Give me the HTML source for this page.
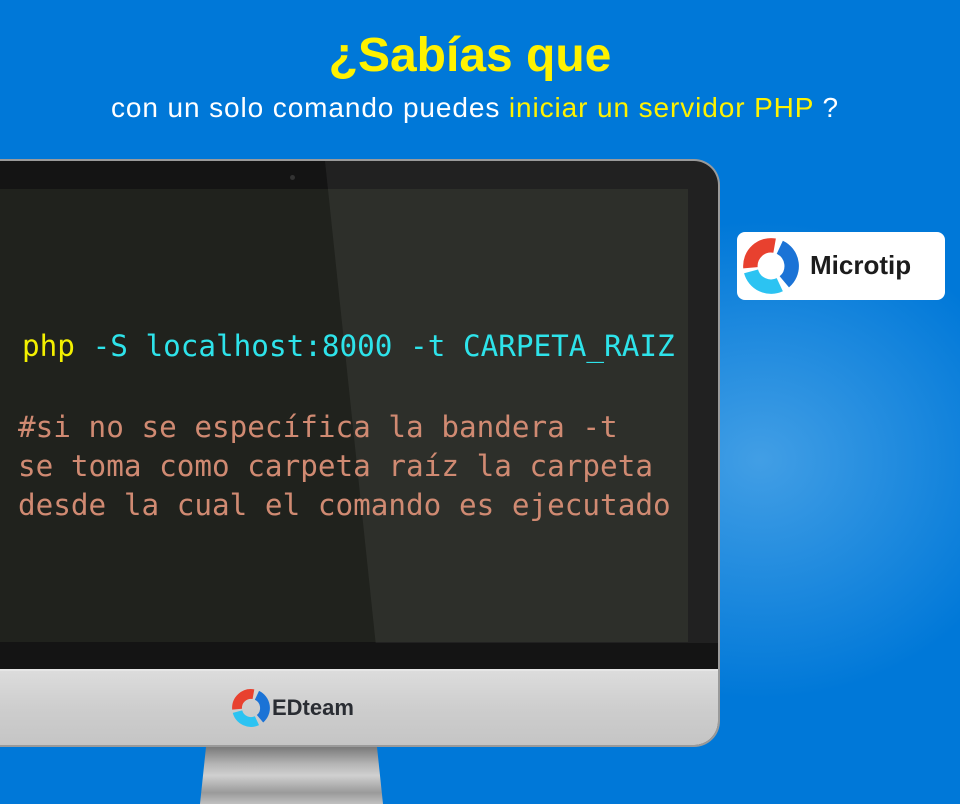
<!DOCTYPE html>
<html><head><meta charset="utf-8"><style>
*{margin:0;padding:0;box-sizing:border-box}
body{width:960px;height:804px;overflow:hidden;position:relative;background:#0078d8;font-family:"Liberation Sans",sans-serif}
.glow{position:absolute;left:560px;top:200px;width:500px;height:520px;background:radial-gradient(ellipse at 40% 50%,rgba(120,190,240,.55),rgba(0,120,216,0) 65%)}
.t1{position:absolute;top:28px;left:0;width:940px;text-align:center;color:#fff200;font-weight:bold;font-size:48px;line-height:56px}
.t2{position:absolute;top:92px;left:111px;width:800px;color:#fff;font-size:28px;line-height:32px;white-space:nowrap;letter-spacing:0.9px}
.t2 span{color:#fff200}
.mon{position:absolute;left:-20px;top:159px;width:740px;height:588px;background:#141414;border-radius:0 26px 26px 0;border:2px solid #9a9a9a;border-left:none;overflow:hidden}
.scr{position:absolute;left:20px;top:28px;width:688px;height:453px;background:#20221d;overflow:hidden}
.shine{position:absolute;left:345px;top:0;width:600px;height:482px;background:rgba(255,255,255,.06);transform:skewX(6deg);transform-origin:top left}
.cam{position:absolute;left:310px;top:14px;width:5px;height:5px;border-radius:50%;background:#333}
.chin{position:absolute;left:0;top:508px;width:740px;height:80px;background:linear-gradient(#dcdcdc,#cdcdcd 50%,#c4c4c4);border-top:2px solid #e6e6e6}
.stand{position:absolute;left:200px;top:747px;width:183px;height:57px;background:linear-gradient(#7a7a7a,#b5b5b5 30%,#d0d0d0 50%,#9a9a9a 80%,#c0c0c0);clip-path:polygon(6px 0,177px 0,183px 57px,0 57px)}
.code{position:absolute;font-family:"DejaVu Sans Mono","Liberation Mono",monospace;font-size:29.3px;white-space:pre;left:22px}
.y{color:#f3f000}.c{color:#2ee3ea}.o{color:#d08a72}
.badge{position:absolute;left:737px;top:232px;width:208px;height:68px;background:#fff;border-radius:8px}
.badge b{position:absolute;left:73px;top:18px;font-size:26px;color:#1c1c1c}
.ed{position:absolute;left:272px;top:695px;font-size:22px;font-weight:bold;color:#2a2d33}
</style></head><body>
<div class="glow"></div>
<div class="t1">¿Sabías que</div>
<div class="t2">con un solo comando puedes <span>iniciar un servidor PHP</span> ?</div>
<div class="mon">
 <div class="cam"></div>
 <div class="scr"></div>
 <div class="shine"></div>
 <div class="chin"></div>
</div>
<div class="stand"></div>
<div class="code" style="top:329px"><span class="y">php</span> <span class="c">-S localhost:8000 -t CARPETA_RAIZ</span></div>
<div class="code o" style="left:18px;top:408px;line-height:39px">#si no se específica la bandera -t
se toma como carpeta raíz la carpeta
desde la cual el comando es ejecutado</div>
<div class="badge">
<svg width="62" height="62" viewBox="0 0 60 60" style="position:absolute;left:3px;top:3px" fill="none" stroke-width="14">
<path d="M10.1 31.7 A20 20 0 0 1 33.5 10.3" stroke="#e8412f"/>
<path d="M38.5 11.9 A20 20 0 0 1 42.9 45.3" stroke="#1b73d6"/>
<path d="M38.5 48.1 A20 20 0 0 1 10.7 35.2" stroke="#2cc3f2"/>
</svg>
<b>Microtip</b></div>
<svg width="42" height="42" viewBox="0 0 60 60" style="position:absolute;left:230px;top:687px" fill="none" stroke-width="14">
<path d="M10.1 31.7 A20 20 0 0 1 33.5 10.3" stroke="#e8412f"/>
<path d="M38.5 11.9 A20 20 0 0 1 42.9 45.3" stroke="#1b73d6"/>
<path d="M38.5 48.1 A20 20 0 0 1 10.7 35.2" stroke="#2cc3f2"/>
</svg>
<div class="ed">EDteam</div>
</body></html>
